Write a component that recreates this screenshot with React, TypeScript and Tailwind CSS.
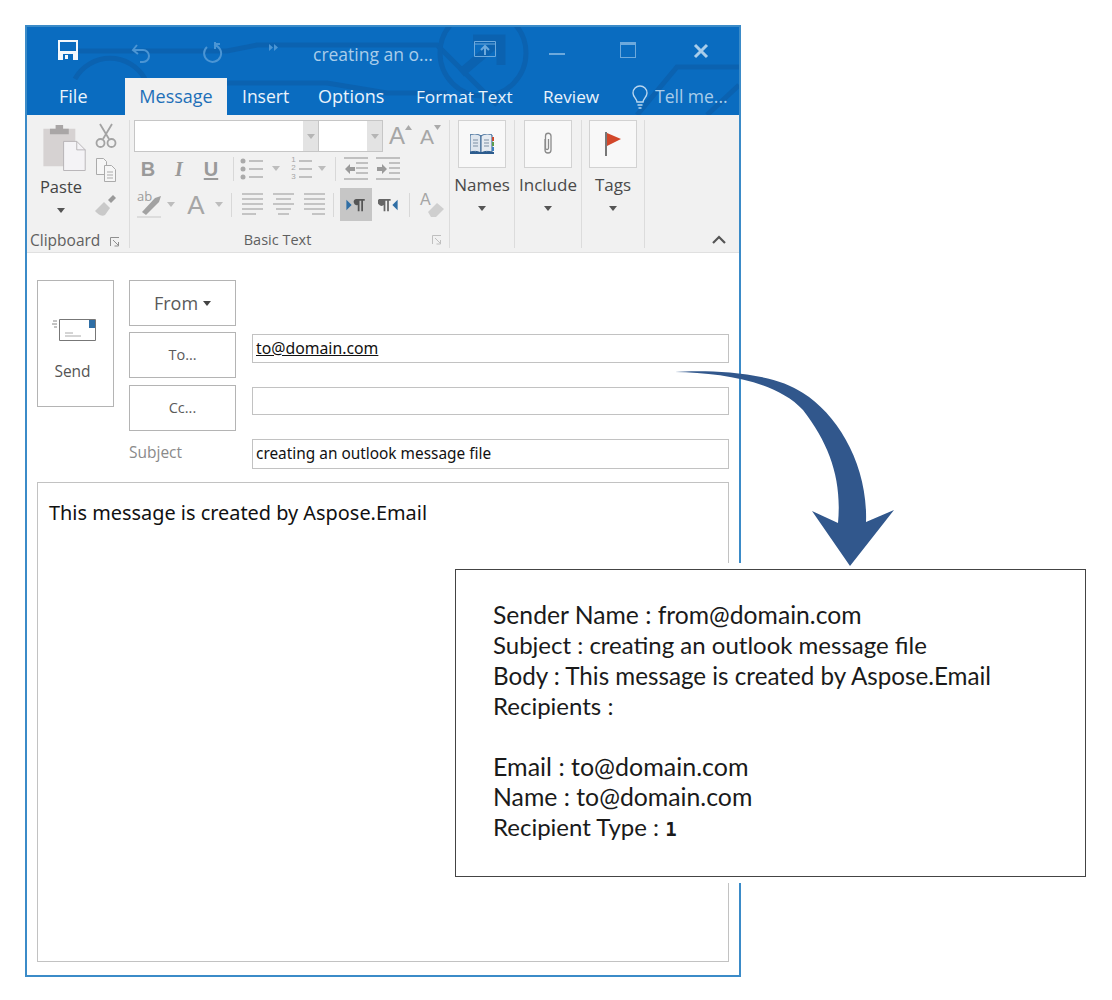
import React from "react";

const ui = "font-['Open_Sans',sans-serif]";

function Caret({ className = "" }: { className?: string }) {
  return (
    <svg width="8" height="5" viewBox="0 0 8 5" className={className}>
      <path d="M0 0h8L4 5z" fill="currentColor" />
    </svg>
  );
}

function VSep({ className = "" }: { className?: string }) {
  return <div className={`w-px h-[24px] bg-[#d8d8d8] shrink-0 ${className}`} />;
}

function Launcher() {
  return (
    <svg width="10" height="10" viewBox="0 0 10 10" fill="none" stroke="#8f8f8f">
      <path d="M.5 9V.5H9" />
      <path d="M3 3l5 5M8.500 5v4h-4" />
    </svg>
  );
}

function Lines({ widths }: { widths: number[][] }) {
  return (
    <svg width="21" height="25" viewBox="0 0 21 25" stroke="#b0b0b0" strokeWidth="1.4">
      {widths.map(([a, b], i) => (
        <path key={i} d={`M${a} ${2 + i * 5}H${b}`} />
      ))}
    </svg>
  );
}

function TitleBar() {
  return (
    <div className="flex items-center h-[51px] relative text-[#a9cdea]">
      <svg width="20" height="20" viewBox="0 0 20 20" className="ml-[31px] mt-[-6px]">
        <path d="M0 0h20v20H0z" fill="#f4f8fc" />
        <path d="M2 2h16v9H2z" fill="#0b6cbf" />
        <path d="M5 14h10v6H5z" fill="#0b6cbf" />
        <path d="M7 15h3v4H7z" fill="#f4f8fc" />
      </svg>
      <svg width="22" height="22" viewBox="0 0 22 22" fill="none" stroke="#4b95d4" strokeWidth="2" className="ml-[52px]">
        <path d="M7 3L3 8l5 4M3 8h10a6 6 0 0 1 0 12h-3" />
      </svg>
      <svg width="22" height="22" viewBox="0 0 22 22" fill="none" stroke="#4b95d4" strokeWidth="2" className="ml-[49px]">
        <path d="M6 5a8.500 8.500 0 1 0 7-2M14 0v7M13 2h6" />
      </svg>
      <svg width="10" height="7" viewBox="0 0 10 7" fill="#4b95d4" className="ml-[46px] mt-[-10px]">
        <path d="M0 0l4 3.500L0 7zM5 0l4 3.500L5 7z" />
      </svg>
      <span className="ml-[34px] text-[17.500px] leading-none mt-[4px] whitespace-nowrap">creating an o...</span>
      <svg width="22" height="16" viewBox="0 0 22 16" fill="none" stroke="#6da9dc" className="ml-[41px] mt-[-8px]">
        <path d="M.5.5h21v15H.5zM1 3h20" />
        <path d="M11 14V6M7 9l4-4 4 4" strokeWidth="2" />
      </svg>
      <div className="w-[16px] h-[2px] bg-[#6da9dc] ml-[53px] mt-[2px]" />
      <div className="w-[16px] h-[16px] border border-[#6da9dc] border-t-[3px] ml-[55px] mt-[-6px]" />
      <svg width="16" height="16" viewBox="0 0 16 16" stroke="#a9cdea" strokeWidth="3" className="ml-[57px] mt-[-3px]">
        <path d="M2 2l12 12M14 2L2 14" />
      </svg>
    </div>
  );
}

function Tabs() {
  return (
    <div className="flex items-center h-[37px] relative text-[18px] text-[#eaf3fb] whitespace-nowrap">
      <span className="ml-[32px] w-[66px]">File</span>
      <span className="w-[102px] h-full bg-[#f1f1f1] text-[#1d6fb8] flex items-center justify-center">Message</span>
      <span className="ml-[15px] w-[76px] text-[17.500px]">Insert</span>
      <span className="w-[98px]">Options</span>
      <span className="w-[127px] text-[17.200px]">Format Text</span>
      <span className="w-[86px] text-[17.200px]">Review</span>
      <svg width="18" height="24" viewBox="0 0 18 24" fill="none" stroke="#b9d6ef" strokeWidth="1.4" className="ml-[2px]">
        <path d="M6 17c0-3-4-5-4-9a7 7 0 0 1 14 0c0 4-4 6-4 9zM6.500 20h5M7.500 23h3" />
      </svg>
      <span className="ml-[6px] text-[17.500px] text-[#a9cdea]">Tell me...</span>
    </div>
  );
}

function ClipboardGroup() {
  return (
    <div className="w-[103px] h-[128px] mt-[5px] border-r border-[#dcdcdc] flex flex-col shrink-0">
      <div className="flex flex-1">
        <div className="w-[68px] flex flex-col items-center pt-[4px]">
          <svg width="46" height="47" viewBox="0 0 46 50" className="ml-[8px]">
            <path d="M0 5h34v40H0z" fill="#d6d2d2" />
            <path d="M7 5h20v6H7zM13 1h8v5h-8z" fill="#a9a6a6" />
            <path d="M21.500 18.500h14l9 9v22h-23z" fill="#f4f3f6" stroke="#b5b2b5" />
            <path d="M35.500 18.500v9h9" fill="none" stroke="#b5b2b5" />
          </svg>
          <span className="text-[16.500px] leading-none text-[#444] mt-[8px]">Paste</span>
          <Caret className="text-[#555] mt-[12px]" />
        </div>
        <div className="w-[22px] flex flex-col items-center pt-[3px]">
          <svg width="22" height="25" viewBox="0 0 22 25" fill="none" stroke="#a3a3a3" strokeWidth="1.800">
            <path d="M5 1l9 15M17 1L8 16" />
            <circle cx="5.500" cy="20" r="4" />
            <circle cx="16.500" cy="20" r="4" />
          </svg>
          <svg width="22" height="24" viewBox="0 0 22 24" fill="#f6f6f6" stroke="#ababab" className="mt-[10px]">
            <path d="M1.500.5h7l3 3v13h-10z" />
            <path d="M9.500 7.500h7l4 4v12h-11z" />
            <path d="M12 14h6M12 17h6M12 20h6" />
          </svg>
          <svg width="24" height="24" viewBox="0 0 24 24" className="mt-[11px]">
            <path d="M1 18l9-9 6 6-5 7c-4 2-7-1-10-4z" fill="#c9c9c9" />
            <path d="M14 7l5-5 3 3-5 5z" fill="#9a9a9a" />
          </svg>
        </div>
      </div>
      <div className="h-[16px] mb-[-1px] flex items-center text-[15.500px] text-[#5f5f5f] pl-[3px]">
        <span className="leading-none">Clipboard</span>
        <span className="ml-[10px] mt-[2px] flex"><Launcher /></span>
      </div>
    </div>
  );
}

function BasicTextGroup() {
  return (
    <div className="w-[320px] h-[128px] mt-[5px] border-r border-[#dcdcdc] flex flex-col shrink-0">
      <div className="flex items-center h-[32px] pl-[4px]">
        <div className="w-[185px] h-[32px] bg-white border border-[#c6c6c6] flex justify-end">
          <div className="w-[15px] bg-[#e3e3e3] flex items-center justify-center text-[#b5b5b5]"><Caret /></div>
        </div>
        <div className="w-[64px] h-[32px] bg-white border border-[#c6c6c6] border-l-0 flex justify-end">
          <div className="w-[15px] bg-[#e3e3e3] flex items-center justify-center text-[#b5b5b5]"><Caret /></div>
        </div>
        <span className="ml-[6px] text-[24px] leading-none text-[#a6a6a6] font-['Liberation_Sans',sans-serif]">A</span>
        <svg width="7" height="5" viewBox="0 0 7 5" className="mt-[-18px]"><path d="M0 5l3.500-5L7 5z" fill="#aaa" /></svg>
        <span className="ml-[8px] text-[21px] leading-none text-[#a6a6a6] font-['Liberation_Sans',sans-serif]">A</span>
        <svg width="7" height="5" viewBox="0 0 7 5" className="mt-[-18px]"><path d="M0 0l3.500 5L7 0z" fill="#aaa" /></svg>
      </div>
      <div className="flex items-center h-[27px] mt-[3px] pl-[3px] text-[#9a9a9a] font-['Liberation_Sans',sans-serif] text-[20px] leading-none">
        <span className="w-[30px] text-center font-bold">B</span>
        <span className="w-[32px] text-center italic font-['Liberation_Serif',serif] font-bold">I</span>
        <span className="w-[32px] text-center underline font-bold underline-offset-2">U</span>
        <VSep className="ml-[6px]" />
        <svg width="24" height="22" viewBox="0 0 24 22" stroke="#b0b0b0" strokeWidth="1.400" className="ml-[6px]">
          <circle cx="3" cy="3" r="2.500" fill="#aaa" stroke="none" />
          <circle cx="3" cy="11" r="2.500" fill="#aaa" stroke="none" />
          <circle cx="3" cy="19" r="2.500" fill="#aaa" stroke="none" />
          <path d="M9 3h14M9 11h14M9 19h14" />
        </svg>
        <Caret className="ml-[8px] text-[#bdbdbd]" />
        <div className="ml-[9px] flex items-center">
          <span className="w-[9px] text-[8px] leading-[8.500px] text-[#a5a5a5] text-center">1<br />2<br />3</span>
          <svg width="14" height="22" viewBox="0 0 14 22" stroke="#b0b0b0" strokeWidth="1.400">
            <path d="M1 3h13M1 11h13M1 19h13" />
          </svg>
        </div>
        <Caret className="ml-[6px] text-[#bdbdbd]" />
        <VSep className="ml-[9px]" />
        <svg width="24" height="24" viewBox="0 0 24 24" stroke="#b0b0b0" strokeWidth="1.300" className="ml-[8px]">
          <path d="M0 1h24M12 6h12M12 11h12M12 16h12M0 22h24" />
          <path d="M1 12l5-5v3h5v4H6v3z" fill="#9a9a9a" stroke="none" />
        </svg>
        <svg width="24" height="24" viewBox="0 0 24 24" stroke="#b0b0b0" strokeWidth="1.300" className="ml-[8px]">
          <path d="M0 1h24M13 6h11M13 11h11M13 16h11M0 22h24" />
          <path d="M11 12L6 7v3H1v4h5v3z" fill="#9a9a9a" stroke="none" />
        </svg>
      </div>
      <div className="flex items-center h-[33px] mt-[6px] pl-[3px] text-[#a5a5a5]">
        <div className="relative w-[26px] h-[26px] ml-[4px] shrink-0">
          <span className="absolute left-0 top-[-2px] text-[13px] leading-none text-[#9c9c9c]">ab</span>
          <svg width="26" height="26" viewBox="0 0 26 26" className="absolute left-0 top-0">
            <path d="M5 20L18 6l6-2-2 6L9 23z" fill="#a2a2a2" />
            <path d="M0 24h24v2H0z" fill="#dcdcdc" />
          </svg>
        </div>
        <Caret className="ml-[4px] text-[#bdbdbd]" />
        <span className="ml-[10px] w-[22px] text-center text-[26px] leading-none text-[#a6a6a6] font-['Liberation_Sans',sans-serif]">A</span>
        <Caret className="ml-[8px] text-[#bdbdbd]" />
        <VSep className="ml-[8px]" />
        <div className="ml-[10px] flex"><Lines widths={[[0, 21], [0, 21], [0, 21], [0, 21], [0, 14]]} /></div>
        <div className="ml-[10px] flex"><Lines widths={[[0, 21], [3, 18], [0, 21], [3, 18], [5, 16]]} /></div>
        <div className="ml-[10px] flex"><Lines widths={[[0, 21], [0, 21], [0, 21], [0, 21], [8, 21]]} /></div>
        <VSep className="ml-[8px]" />
        <div className="ml-[6px] w-[32px] h-[33px] bg-[#c6c6c6] flex items-center justify-center shrink-0">
          <svg width="20" height="14" viewBox="0 0 22 16">
            <path d="M0 2l6 6-6 6z" fill="#2f6ea5" />
            <path d="M8 1h13v2h-2v12h-2V3h-2v12h-2V8a3.500 3.500 0 0 1-2-7z" fill="#555" />
          </svg>
        </div>
        <svg width="20" height="14" viewBox="0 0 22 16" className="ml-[6px]">
          <path d="M1 1h13v2h-2v12h-2V3H8v12H6V8a3.500 3.500 0 0 1-5-7z" fill="#666" />
          <path d="M22 2l-6 6 6 6z" fill="#2f6ea5" />
        </svg>
        <VSep className="ml-[11px]" />
        <div className="relative w-[24px] h-[26px] ml-[10px] shrink-0">
          <span className="absolute left-0 top-0 text-[16px] leading-none text-[#a5a5a5] font-['Liberation_Sans',sans-serif]">A</span>
          <svg width="24" height="26" viewBox="0 0 24 26" className="absolute left-0 top-0">
            <path d="M8 20l9-9 7 6-8 8h-5z" fill="#cfcfcf" />
          </svg>
        </div>
      </div>
      <div className="flex-1 relative flex justify-center text-[14.500px] text-[#5f5f5f] pr-[24px]">
        <span className="leading-none mt-[12px]">Basic Text</span>
        <span className="absolute right-[7px] top-[14px] flex opacity-50"><Launcher /></span>
      </div>
    </div>
  );
}

function BigButton({ label, width, children }: { label: string; width: string; children: React.ReactNode }) {
  return (
    <div className={`${width} h-[128px] mt-[5px] border-r border-[#dcdcdc] flex flex-col items-center shrink-0`}>
      <div className="w-[48px] h-[48px] bg-[#f8f8f8] border border-[#d2d2d2] flex items-center justify-center">
        {children}
      </div>
      <span className="text-[17px] leading-none text-[#4a4a4a] mt-[8px]">{label}</span>
      <Caret className="text-[#555] mt-[13px]" />
    </div>
  );
}

function Ribbon() {
  return (
    <div className="flex h-[138px] bg-[#f1f1f1] border-b border-[#e0e0e0] relative">
      <ClipboardGroup />
      <BasicTextGroup />
      <BigButton label="Names" width="w-[65px]">
        <svg width="24" height="20" viewBox="0 0 24 20">
          <path d="M0 1c4-2 8-1 11 1v17c-3-2-7-2-11-1z" fill="#dfe6ee" stroke="#2c5c8e" />
          <path d="M22 1c-4-2-8-1-11 1v17c3-2 7-2 11-1z" fill="#e6ebf1" stroke="#2c5c8e" />
          <path d="M3 6h5M3 9h5M3 12h5M14 6h5M14 9h5M14 12h5" stroke="#7c8fa3" />
          <path d="M22 3h2v4h-2z" fill="#cc4a2f" />
          <path d="M22 8h2v4h-2z" fill="#5c9e4d" />
          <path d="M22 13h2v4h-2z" fill="#3f7fc0" />
          <path d="M0 18h24v2H0z" fill="#2c5c8e" />
        </svg>
      </BigButton>
      <BigButton label="Include" width="w-[67px]">
        <svg width="12" height="24" viewBox="0 0 12 24" fill="none" stroke="#8a8a8a" strokeWidth="1.300">
          <path d="M3 7v11a3 3 0 0 0 6 0V4a2.700 2.700 0 0 0-5.500 0v12a1.500 1.500 0 0 0 3 0V7" />
        </svg>
      </BigButton>
      <BigButton label="Tags" width="w-[63px]">
        <svg width="16" height="24" viewBox="0 0 16 24">
          <path d="M0 0h2v24H0z" fill="#777" />
          <path d="M2 1l14 6-14 7z" fill="#d2472a" />
        </svg>
      </BigButton>
      <svg width="14" height="9" viewBox="0 0 14 9" fill="none" stroke="#555" strokeWidth="2.200" className="absolute right-[13px] bottom-[8px]">
        <path d="M1 8l6-6 6 6" />
      </svg>
    </div>
  );
}

function FormButton({ children, className = "" }: { children: React.ReactNode; className?: string }) {
  return (
    <div className={`w-[107px] border border-[#b4b4b4] flex items-center justify-center ${className}`}>
      {children}
    </div>
  );
}

function Compose() {
  return (
    <div className="flex flex-col flex-1 pl-[10px] pr-[10px]">
      <div className="flex pt-[27px]">
        <div className="w-[77px] h-[127px] border border-[#b4b4b4] flex flex-col items-center shrink-0 mr-[15px]">
          <svg width="44" height="24" viewBox="0 0 44 24" className="mt-[37px] mr-[3px]">
            <path d="M7.500 1.500h36v21h-36z" fill="#fff" stroke="#777" />
            <path d="M37 2h6v8h-6z" fill="#2f6ea5" />
            <path d="M13 15h8M13 18h16" stroke="#aaa" />
            <path d="M1 3h4M0 6h5M2 9h3" stroke="#888" />
          </svg>
          <span className="text-[15.500px] leading-none text-[#555] mt-[22px] mr-[6px]">Send</span>
        </div>
        <div className="flex flex-col shrink-0 text-[#5a5a5a]">
          <FormButton className="h-[46px] text-[18px]">
            <span>From</span>
            <Caret className="ml-[5px] text-[#444]" />
          </FormButton>
          <FormButton className="h-[46px] mt-[6px] text-[14.500px]">To...</FormButton>
          <FormButton className="h-[46px] mt-[7px] text-[14.500px]">Cc...</FormButton>
          <span className="text-[15.500px] leading-none text-[#8a8a8a] mt-[14px]">Subject</span>
        </div>
        <div className="flex flex-col flex-1 ml-[16px] text-[#111] font-['Noto_Sans',sans-serif]">
          <div className="h-[29px] mt-[54px] border border-[#c2c2c2] flex items-center pl-[3px] text-[15.800px]">
            <span className="underline">to@domain.com</span>
          </div>
          <div className="h-[28px] mt-[24px] border border-[#c2c2c2]" />
          <div className="h-[30px] mt-[24px] border border-[#c2c2c2] flex items-center pl-[3px] text-[15.400px]">
            creating an outlook message file
          </div>
        </div>
      </div>
      <div className="h-[480px] mt-[13px] border border-[#c2c2c2] pl-[11px] pt-[16px] text-[19.900px] leading-[28px] text-[#111] font-['Noto_Sans',sans-serif]">
        This message is created by Aspose.Email
      </div>
    </div>
  );
}

function MailWindow() {
  return (
    <div className={`w-[716px] h-[952px] border-2 border-[#3b8bc8] flex flex-col ${ui}`}>
      <div className="relative bg-[#0a6cc0] overflow-hidden">
        <svg width="712" height="88" viewBox="0 0 712 88" fill="none" stroke="#0b62b0" strokeWidth="5" className="absolute left-0 top-0">
          <path d="M30 24h170l30-6h180l60 60" />
          <path d="M48 52a40 40 0 0 1 70 0M180 56h120l60 10h60" />
          <circle cx="456" cy="26" r="43" />
          <path d="M434 46l39-33M446 12h28v26" strokeWidth="9" />
          <path d="M610 88l40-48h62M680 88l32-30" />
        </svg>
        <TitleBar />
        <Tabs />
      </div>
      <Ribbon />
      <Compose />
    </div>
  );
}

function ResultBox() {
  return (
    <div className="absolute left-[455px] top-[569px] w-[631px] h-[308px] bg-white border border-[#444] shadow-[0_0_0_6px_#fff] pl-[37px] pt-[30px] text-[24px] leading-[30.300px] text-[#1a1a1a] font-['Lato',sans-serif] whitespace-nowrap">
      <div className="text-[24.700px]">Sender Name : from@domain.com</div>
      <div>Subject : creating an outlook message file</div>
      <div className="text-[24.200px]">Body : This message is created by Aspose.Email</div>
      <div>Recipients :</div>
      <div>{"\u00a0"}</div>
      <div className="text-[25px]">Email : to@domain.com</div>
      <div className="text-[24.800px]">Name : to@domain.com</div>
      <div>
        Recipient Type : <span className="text-[19px] font-semibold font-['DejaVu_Sans_Mono',monospace]">1</span>
      </div>
    </div>
  );
}

function CurvedArrow() {
  return (
    <svg width="222" height="198" viewBox="675 370 222 198" className="absolute left-[675px] top-[370px]">
      <path
        d="M675 372C700 370 770 370 803 393C838 415 868 465 866 522L894 510L850 566L812 511L838 523C842 480 830 445 803 410C775 380 720 373 675 372Z"
        fill="#31578c"
      />
    </svg>
  );
}

export default function App() {
  return (
    <div className="relative w-[1112px] h-[1000px] bg-white pl-[25px] pt-[25px] overflow-hidden">
      <MailWindow />
      <ResultBox />
      <CurvedArrow />
    </div>
  );
}
